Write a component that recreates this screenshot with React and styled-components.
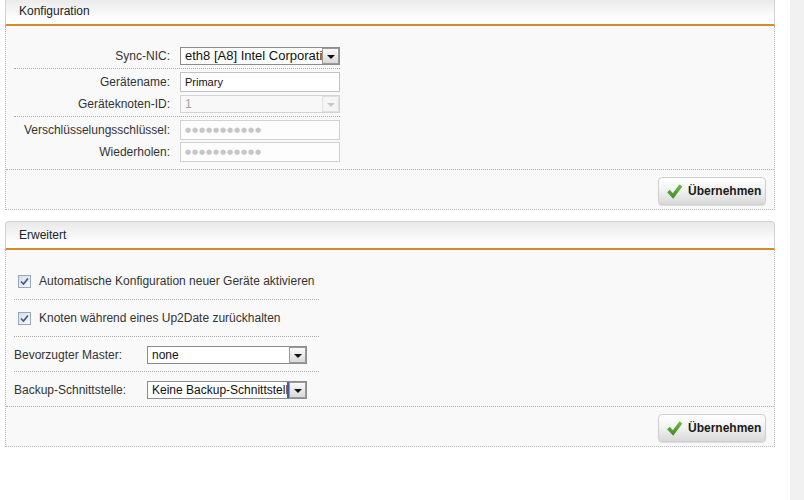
import React from "react";
import styled, { createGlobalStyle } from "styled-components";

const GlobalStyle = createGlobalStyle`
  html, body {
    margin: 0;
    padding: 0;
    background: #fff;
    font-family: "Liberation Sans", Arial, sans-serif;
    font-size: 12px;
    color: #333;
  }
`;

const Page = styled.div`
  display: flex;
  min-height: 100vh;
  overflow: hidden;
`;

const Main = styled.div`
  width: 785px;
  padding-left: 5px;
  display: flex;
  flex-direction: column;
  gap: 11px;
`;

const Strip = styled.div`
  width: 14px;
  background: #f1f1f1;
`;

const Panel = styled.section`
  width: 770px;
  margin-top: ${(p) => (p.$first ? "-3px" : "0")};
`;

const PanelHeader = styled.div`
  height: 26px;
  box-sizing: content-box;
  border: 1px solid #d2d2d2;
  border-bottom: 2px solid #d88a2c;
  border-radius: 4px 4px 0 0;
  background: linear-gradient(#e9e9e9, #fdfdfd 75%, #fff);
  display: flex;
  align-items: center;
  padding-left: 13px;
  font-size: 12px;
  color: #222;
`;

const PanelBody = styled.div`
  background: #f9f9f9;
  border: 1px dotted #b9b9b9;
  border-top: none;
`;

const Form = styled.div`
  padding: ${(p) => p.$pad};
  padding-left: 8px;
`;

const Group = styled.div`
  width: ${(p) => p.$width}px;
  padding: ${(p) => (p.$last ? "2px 0 6px" : "2px 0 1px")};
  border-bottom: ${(p) => (p.$last ? "none" : "1px dotted #a9a9a9")};
`;

const Row = styled.div`
  display: grid;
  grid-template-columns: 156px 160px;
  column-gap: 10px;
  align-items: center;
  height: 22px;
`;

const Label = styled.label`
  text-align: ${(p) => (p.$left ? "left" : "right")};
  white-space: nowrap;
  color: #333;
`;

const TextInput = styled.input`
  box-sizing: border-box;
  width: 160px;
  height: 20px;
  margin: 0;
  padding: 0 4px;
  border: 1px solid #c3c3c3;
  background: #fff;
  font-family: "Liberation Sans", Arial, sans-serif;
  font-size: 11px;
  color: #111;
  outline: none;
`;

const PasswordBox = styled.div`
  box-sizing: border-box;
  width: 160px;
  height: 20px;
  padding: 0 4px;
  border: 1px solid #d2d2d2;
  background: #fdfdfd;
  display: flex;
  align-items: center;
  color: #c6c6c6;
  font-family: "DejaVu Sans", sans-serif;
  font-size: 7px;
  letter-spacing: 0.9px;
`;

const SelectBox = styled.div`
  box-sizing: border-box;
  width: 160px;
  height: 18px;
  display: flex;
  align-items: stretch;
  border: 1px solid ${(p) => (p.$disabled ? "#d3d3d3" : "#8c8c8c")};
  background: ${(p) => (p.$disabled ? "#f8f8f8" : "#fff")};
`;

const SelectText = styled.span`
  flex: 1;
  overflow: hidden;
  white-space: nowrap;
  padding-left: 4px;
  line-height: 16px;
  font-family: "Liberation Sans", Arial, sans-serif;
  font-size: ${(p) => p.$size || 12}px;
  color: ${(p) => (p.$disabled ? "#a0a0a0" : "#111")};
  border-right: ${(p) => (p.$focus ? "2px solid #3a5fa8" : "none")};
`;

const ArrowBox = styled.span`
  width: 15px;
  display: flex;
  align-items: center;
  justify-content: center;
  border: 1px solid ${(p) => (p.$disabled ? "#e0e0e0" : "#9a9a9a")};
  background: ${(p) =>
    p.$disabled ? "#f5f5f5" : "linear-gradient(#fafafa, #d9d9d9)"};
  &::after {
    content: "";
    border-left: 4px solid transparent;
    border-right: 4px solid transparent;
    border-top: 4px solid ${(p) => (p.$disabled ? "#c8c8c8" : "#111")};
    margin-top: 1px;
  }
`;

const CheckRow = styled.div`
  width: 301px;
  padding: 10px 0 10px 4px;
  display: flex;
  align-items: center;
  gap: 8px;
  height: 16px;
  border-bottom: 1px dotted #a9a9a9;
`;

const CheckBox = styled.span`
  box-sizing: border-box;
  width: 13px;
  height: 13px;
  border: 1px solid #9aa6ba;
  background: linear-gradient(135deg, #d7dde9, #f6f8fb);
  display: flex;
  align-items: center;
  justify-content: center;
`;

const SelectRow = styled.div`
  width: 305px;
  padding: 9px 0 8px;
  display: grid;
  grid-template-columns: 133px 160px;
  align-items: center;
  height: 17px;
  border-bottom: ${(p) => (p.$last ? "none" : "1px dotted #a9a9a9")};
`;

const Actions = styled.div`
  border-top: 1px dotted #a9a9a9;
  padding: 7px 8px 4px;
  display: flex;
  justify-content: flex-end;
`;

const ApplyButton = styled.button`
  box-sizing: border-box;
  width: 108px;
  height: 28px;
  margin: 0;
  padding: 0 0 0 7px;
  display: flex;
  align-items: center;
  gap: 5px;
  border: 1px solid #cfcfcf;
  border-radius: 4px;
  background: linear-gradient(#ffffff, #f1f1f1 50%, #d9d9d9);
  box-shadow: 0 1px 1px rgba(0, 0, 0, 0.12);
  font-family: "Liberation Sans", Arial, sans-serif;
  font-weight: bold;
  font-size: 12px;
  color: #1a1a1a;
  cursor: pointer;
`;

function Select({ value, disabled, size, focus }) {
  return (
    <SelectBox $disabled={disabled}>
      <SelectText $disabled={disabled} $size={size} $focus={focus}>
        {value}
      </SelectText>
      <ArrowBox $disabled={disabled} />
    </SelectBox>
  );
}

function GreenCheck() {
  return (
    <svg width="17" height="17" viewBox="0 0 16 16">
      <defs>
        <linearGradient id="gc" x1="0" y1="0" x2="0" y2="1">
          <stop offset="0" stopColor="#6cbf45" />
          <stop offset="1" stopColor="#3d8c24" />
        </linearGradient>
      </defs>
      <path d="M1 8.6 L3.6 6.4 L6.4 9.6 L12.8 1.2 L15.4 3.2 L6.8 14.8 Z" fill="url(#gc)" />
    </svg>
  );
}

function Apply() {
  return (
    <Actions>
      <ApplyButton type="button">
        <GreenCheck />
        Übernehmen
      </ApplyButton>
    </Actions>
  );
}

function Tick() {
  return (
    <svg width="9" height="9" viewBox="0 0 9 9">
      <path d="M1 4.5 L3.5 7 L8 1.5" fill="none" stroke="#3f5687" strokeWidth="1.6" />
    </svg>
  );
}

export default function App() {
  return (
    <>
      <GlobalStyle />
      <Page>
        <Main>
          <Panel $first>
            <PanelHeader>Konfiguration</PanelHeader>
            <PanelBody>
              <Form $pad="17px 0 0">
                <Group $width={326}>
                  <Row>
                    <Label>Sync-NIC:</Label>
                    <Select value="eth8 [A8] Intel Corporati" size={13} />
                  </Row>
                </Group>
                <Group $width={326}>
                  <Row>
                    <Label>Gerätename:</Label>
                    <TextInput readOnly defaultValue="Primary" />
                  </Row>
                  <Row>
                    <Label>Geräteknoten-ID:</Label>
                    <Select value="1" disabled />
                  </Row>
                </Group>
                <Group $width={326} $last>
                  <Row>
                    <Label>Verschlüsselungsschlüssel:</Label>
                    <PasswordBox>●●●●●●●●●●●</PasswordBox>
                  </Row>
                  <Row>
                    <Label>Wiederholen:</Label>
                    <PasswordBox>●●●●●●●●●●●</PasswordBox>
                  </Row>
                </Group>
              </Form>
              <Apply />
            </PanelBody>
          </Panel>

          <Panel>
            <PanelHeader>Erweitert</PanelHeader>
            <PanelBody>
              <Form $pad="13px 0 0">
                <CheckRow>
                  <CheckBox>
                    <Tick />
                  </CheckBox>
                  Automatische Konfiguration neuer Geräte aktivieren
                </CheckRow>
                <CheckRow>
                  <CheckBox>
                    <Tick />
                  </CheckBox>
                  Knoten während eines Up2Date zurückhalten
                </CheckRow>
                <SelectRow>
                  <Label as="span" $left>Bevorzugter Master:</Label>
                  <Select value="none" />
                </SelectRow>
                <SelectRow $last>
                  <Label as="span" $left>Backup-Schnittstelle:</Label>
                  <Select value="Keine Backup-Schnittstell" focus />
                </SelectRow>
              </Form>
              <Apply />
            </PanelBody>
          </Panel>
        </Main>
        <Strip />
      </Page>
    </>
  );
}
